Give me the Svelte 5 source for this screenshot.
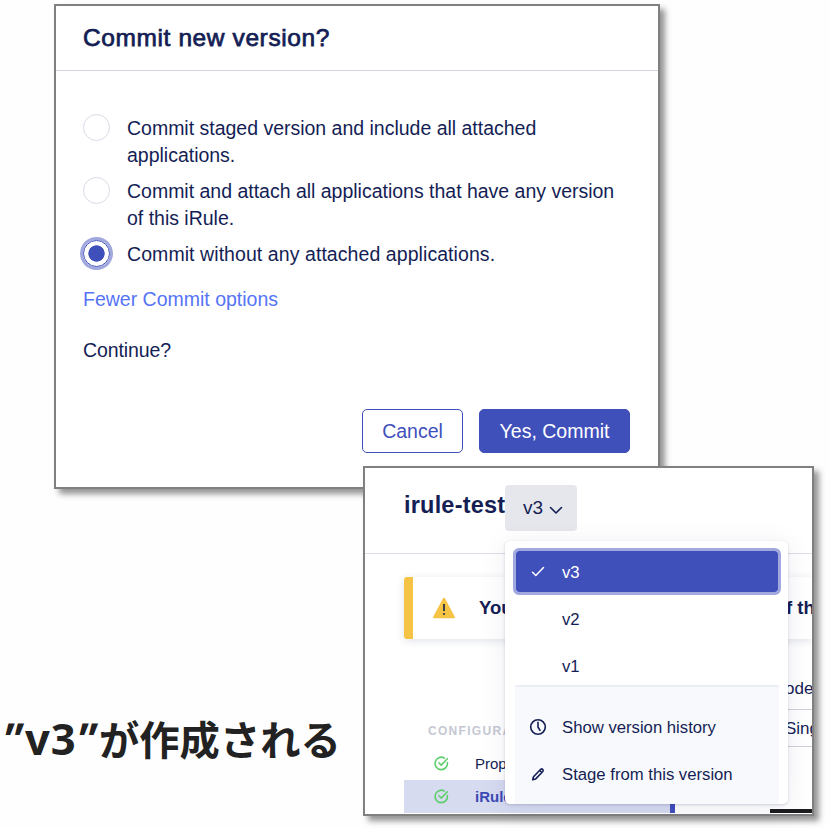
<script>
  const options = [
    { lines: ['Commit staged version and include all attached', 'applications.'], checked: false },
    { lines: ['Commit and attach all applications that have any version', 'of this iRule.'], checked: false },
    { lines: ['Commit without any attached applications.'], checked: true }
  ];
  const versions = ['v3', 'v2', 'v1'];
  const current = 'v3';
</script>

<main>
  <section class="window dialog">
    <header><h2>Commit new version?</h2></header>
    <div class="content">
      {#each options as option}
        <div class="option" class:chosen={option.checked}>
          <span class="radio" class:checked={option.checked}></span>
          <div class="label">
            {#each option.lines as line}<div>{line}</div>{/each}
          </div>
        </div>
      {/each}
      <div class="link">Fewer Commit options</div>
      <div class="continue">Continue?</div>
    </div>
    <footer>
      <button class="cancel">Cancel</button>
      <button class="commit">Yes, Commit</button>
    </footer>
  </section>

  <section class="window editor">
    <div class="bar">
      <h3>irule-test</h3>
      <button class="picker">
        <span>v3</span>
        <svg width="14" height="9" viewBox="0 0 14 9"><path d="M1.500 1.500 7 7l5.500-5.500" /></svg>
      </button>
    </div>
    <div class="alert">
      <svg width="24" height="22" viewBox="0 0 24 22">
        <path d="M10.900 1.600Q12 0 13.100 1.600L22.900 20Q23.200 21.300 22 21.300H2Q.8 21.300 1.100 20Z" fill="#f6c445" />
        <path d="M12 7v7" stroke="#26304f" stroke-width="1.800" stroke-linecap="butt" />
        <circle cx="12" cy="17" r="1.100" fill="#26304f" />
      </svg>
      <b>You</b>
      <b class="tail">f th</b>
    </div>
    <div class="body">
      <nav>
        <div class="caption">CONFIGURA</div>
        {#each ['Prop', 'iRule'] as item, i}
          <div class="row" class:active={i === 1}>
            <svg width="15" height="15" viewBox="0 0 15 15">
              <path d="M13.400 6.500A6.200 6.200 0 1 1 10.300 2" />
              <path d="M4.900 6.800 7.200 9.100 13.400 2.700" />
            </svg>
            <span>{item}</span>
          </div>
        {/each}
      </nav>
      <div class="pane">
        <div class="field">ode</div>
        <div class="field value">Sing</div>
        <div class="code"></div>
      </div>
    </div>

    <div class="menu">
      {#each versions as v}
        <div class="item" class:selected={v === current}>
          <span class="icon">
            {#if v === current}
              <svg width="14" height="12" viewBox="0 0 14 12"><path d="M1.500 6.300 4.800 9.500 12.500 1.500" /></svg>
            {/if}
          </span>
          <span class="name">{v}</span>
        </div>
      {/each}
      <div class="actions">
        <div class="action">
          <span class="icon">
            <svg width="18" height="18" viewBox="0 0 18 18"><circle cx="9" cy="8" r="7.300" /><path d="M9 3.300V8l2 3.400" /></svg>
          </span>
          <span>Show version history</span>
        </div>
        <div class="action">
          <span class="icon">
            <svg width="14" height="14" viewBox="0 0 14 14"><path d="M1.700 11.700 2.500 8.700 9.700 1.300Q10.800.5 11.800 1.500 12.600 2.500 11.800 3.500L4.700 10.900ZM8.700 2.400l2.100 2.100" /></svg>
          </span>
          <span>Stage from this version</span>
        </div>
      </div>
    </div>
  </section>

  <div class="note"><span class="mark">"</span><span class="latin">v3</span><span class="mark">"</span><span class="kana">が作成される</span></div>
</main>

<style>
  :global(body) { background: #fff; }
  * { box-sizing: border-box; }
  main {
    position: relative;
    width: 830px;
    height: 828px;
    overflow: hidden;
    background: #fefefe;
    color: #141e55;
    font-family: "Liberation Sans", Arial, sans-serif;
    white-space: nowrap;
  }
  h2, h3 { margin: 0; }
  svg { display: block; fill: none; stroke-linecap: round; stroke-linejoin: round; flex: none; overflow: visible; }
  button { font: inherit; padding: 0; margin: 0; }
  .window {
    position: absolute;
    border: 2px solid #808080;
    background: #fff;
    box-shadow: 5px 5px 6px rgba(0, 0, 0, .42);
  }
  .dialog {
    left: 54px; top: 4px; width: 606px; height: 485px;
    display: flex; flex-direction: column;
    font-size: 19.500px;
  }
  .dialog header { height: 65px; border-bottom: 1px solid #d3d4e0; padding: 16px 27px 0; }
  h2 {
    font-size: 24.500px; line-height: 32px; font-weight: 400; letter-spacing: .6px;
    -webkit-text-stroke: .75px #141e55;
  }
  .content { padding: 43px 26px 0 27px; flex: 1; }
  .option { display: flex; height: 63px; line-height: 27px; letter-spacing: -.01px; }
  .option.chosen { height: 35.500px; letter-spacing: .07px; }
  .label { padding-top: 1px; }
  .radio {
    width: 27px; height: 27px; margin-right: 17px; flex: none;
    border: 1.500px solid #dadae6; border-radius: 50%;
  }
  .radio.checked {
    border: 1px solid #4050bb;
    background: radial-gradient(circle, #4050bb 7.800px, #fff 8.500px);
    box-shadow: 0 0 0 3px #a0a8dd;
  }
  .link { margin-top: 9px; line-height: 28px; color: #5674f5; }
  .continue { margin-top: 23px; line-height: 28px; letter-spacing: -.1px; }
  footer { display: flex; justify-content: flex-end; gap: 16px; padding: 0 28px 34px; }
  footer button { height: 44px; border-radius: 5px; border: 1.500px solid #4050bb; }
  .cancel { width: 101px; background: #fff; color: #4050bb; }
  .commit { width: 151px; background: #4050bb; color: #fff; }

  .editor { left: 363px; top: 466px; width: 451px; height: 350px; }
  .bar {
    display: flex; height: 86px; padding: 17px 0 0 39px;
    border-bottom: 1px solid #dcdde8;
  }
  h3 { width: 101px; font-size: 23.500px; line-height: 40px; letter-spacing: .2px; }
  .picker {
    display: flex; align-items: center; gap: 7px; width: 72px; height: 46px; padding-left: 18px;
    border: 0; border-radius: 4px; background: #e6e7ec; color: #141e55; font-size: 19px;
  }
  .picker svg { stroke: #141e55; stroke-width: 1.600; margin: 4px 0 0 -1px; }
  .alert {
    display: flex; align-items: center; height: 62px; margin: 23px 0 0 39px; padding-left: 19px;
    border-left: 9px solid #f6c445; border-radius: 3px 0 0 3px;
    box-shadow: 0 2px 9px rgba(20, 30, 85, .12); font-size: 18.500px;
    overflow: hidden;
    clip-path: inset(-10px 0 -12px -10px);
  }
  .alert b { flex: none; width: 300px; margin-left: 23px; }
  .alert b.tail { margin-left: 7px; width: auto; }
  .body { display: flex; height: 174px; padding-left: 39px; overflow: hidden; }
  nav { width: 271px; flex: none; padding-top: 83px; }
  .caption { height: 25px; padding-left: 24px; font-size: 12px; line-height: 18px; font-weight: 700; letter-spacing: 1.300px; color: #c5c8d3; }
  .row { display: flex; align-items: center; height: 33px; padding-left: 30px; gap: 26px; font-size: 15px; }
  .row svg { stroke: #5fce6e; stroke-width: 1.600; }
  .row.active { background: #d7dbf0; border-right: 5px solid #4050bb; color: #3b49b5; font-weight: 700; }
  .pane { flex: 1; padding-left: 110px; }
  .field { height: 71px; padding-top: 38px; border-bottom: 1px solid #cfd1de; font-size: 17px; line-height: 24px; }
  .field.value { height: 37px; padding-top: 7px; }
  .code { height: 5px; margin: 62px 0 0 -15px; background: #1d1d1f; }

  .menu {
    position: absolute; left: 140px; top: 73px; width: 283px; height: 263px;
    padding: 7px 7px 0 8px; border-radius: 5px; background: #fff;
    box-shadow: 0 1px 3px rgba(20, 30, 85, .18), 0 4px 28px rgba(20, 30, 85, .08);
    font-size: 16.700px;
  }
  .item, .action { display: flex; align-items: center; height: 47px; }
  .item { border: 3px solid transparent; padding-left: 4px; border-radius: 6px; }
  .item.selected { background: #4050bb; background-clip: padding-box; border-color: #a1a8dd; color: #fff; }
  .name { padding-top: 2px; }
  .icon { display: flex; justify-content: center; width: 36px; margin-right: 6px; }
  .item svg { stroke: #fff; stroke-width: 1.500; }
  .actions { height: 119px; margin: -4px 2px 0; padding-top: 17px; border-top: 2px solid #eceef6; background: #f8f9fc; }
  .action { padding-left: 5px; }
  .action svg { stroke: #141e55; stroke-width: 1.600; }

  .note {
    position: absolute; left: 4px; top: 708px; display: flex; height: 60px; line-height: 60px;
    font-size: 40.300px; font-weight: 700; color: #222;
  }
  .mark { width: 21px; font-family: "Noto Sans", sans-serif; font-size: 44px; transform: skewX(-18deg); transform-origin: 50% 35%; }
  .latin { width: 53px; font-family: "Noto Sans", sans-serif; font-size: 43.500px; letter-spacing: 1px; }
  .kana { font-family: "Noto Sans CJK JP", sans-serif; }
</style>
